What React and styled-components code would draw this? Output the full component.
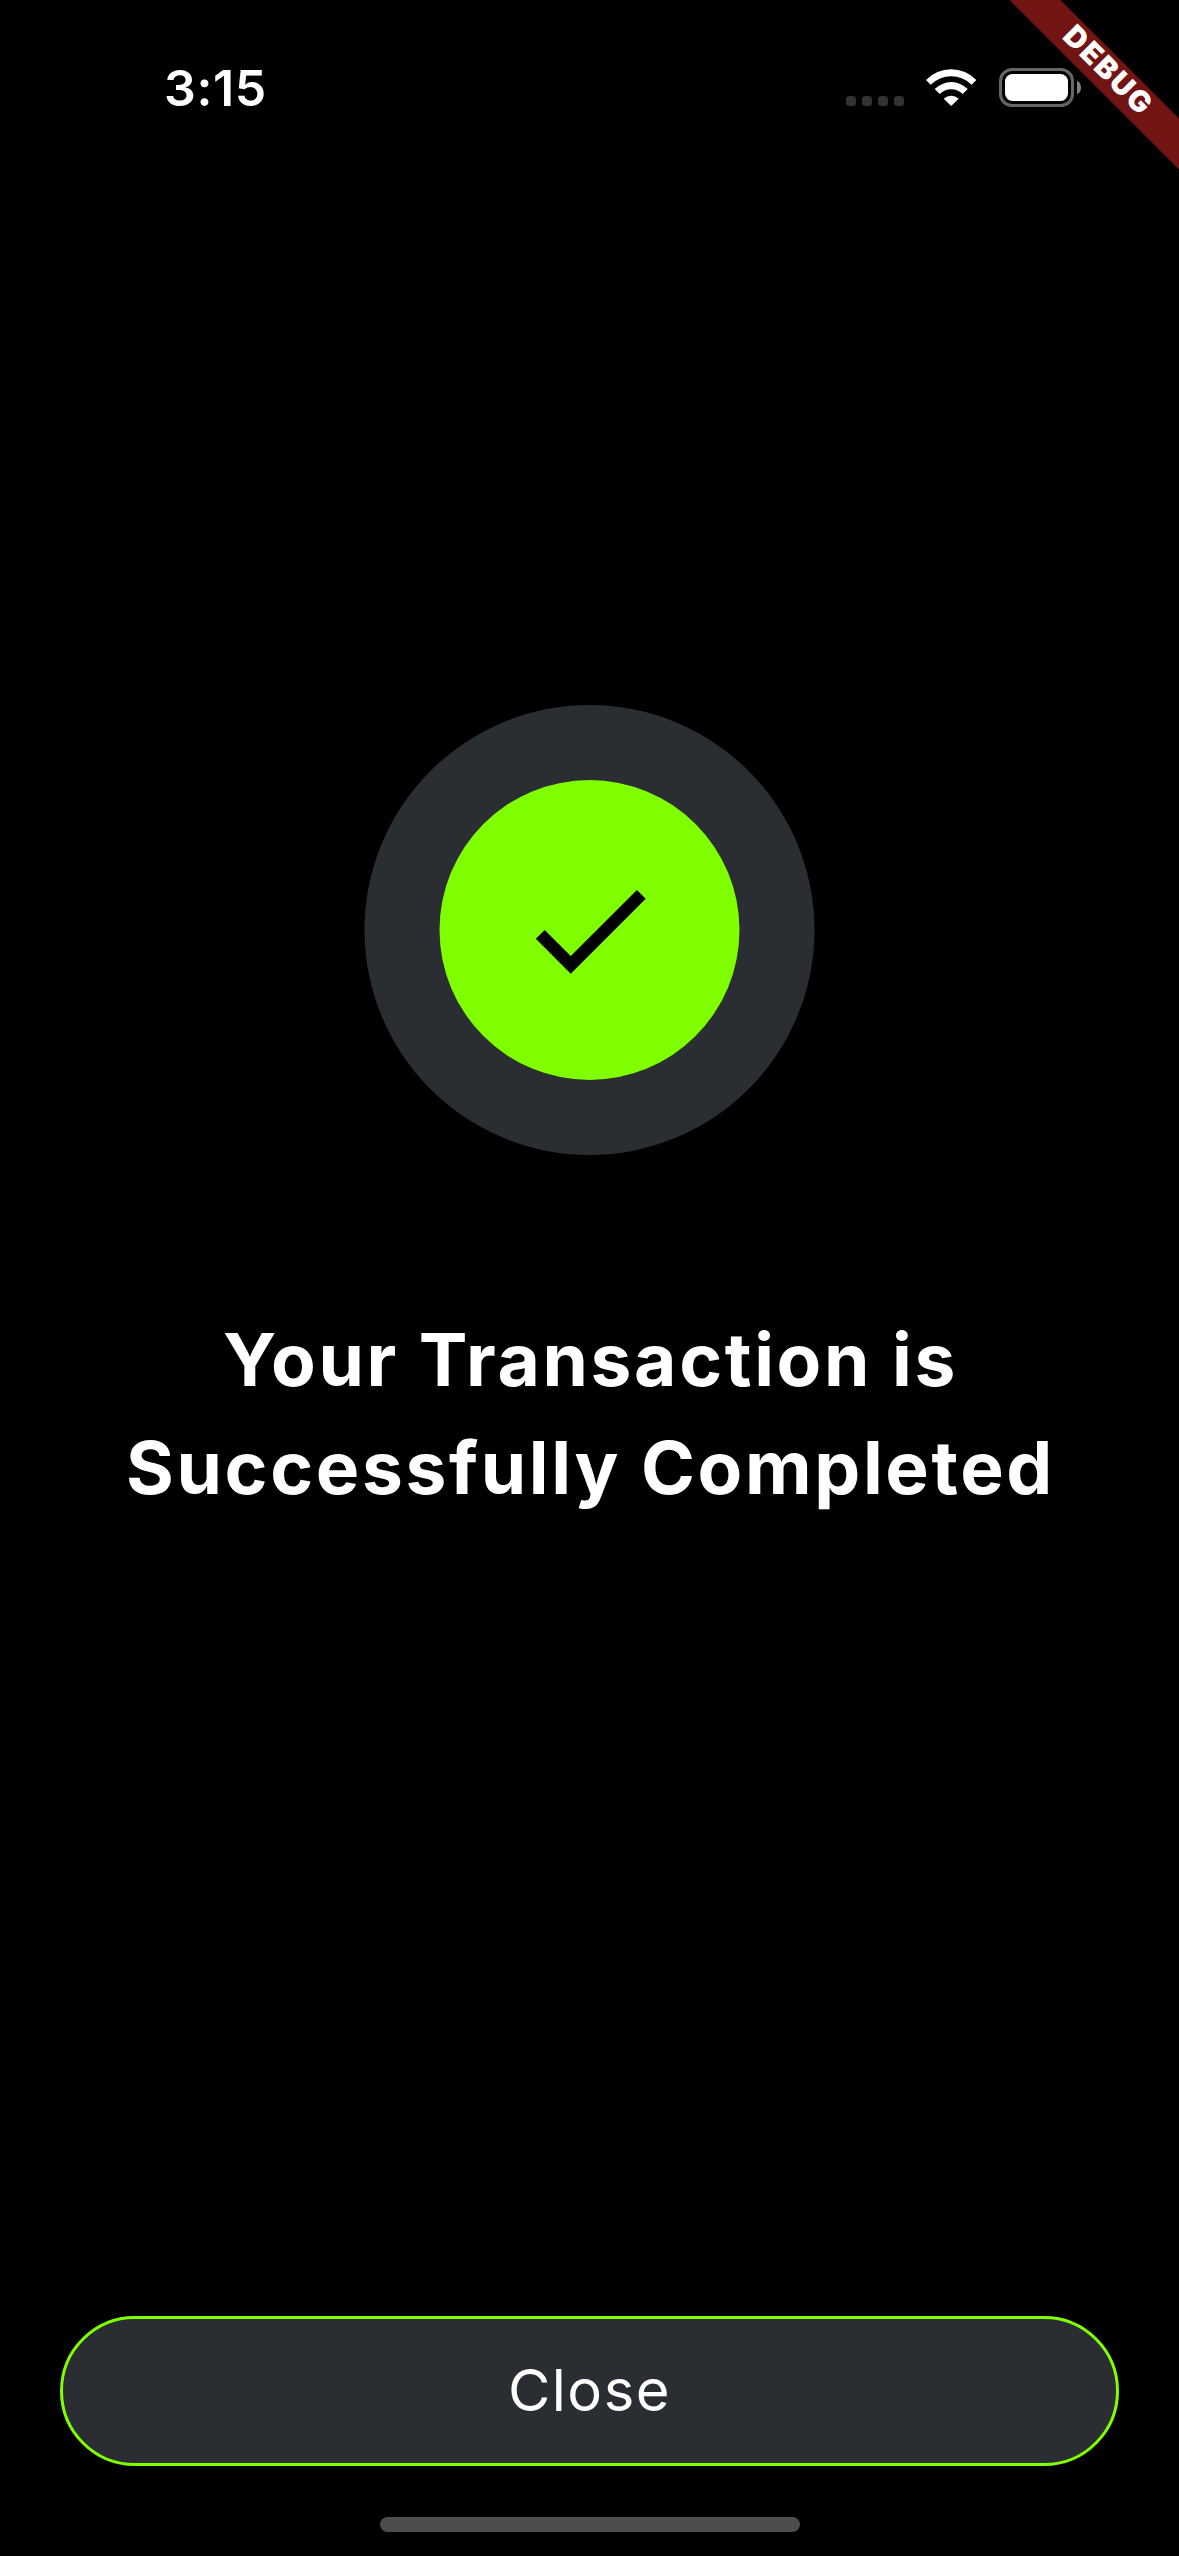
import React from "react";
import styled, { createGlobalStyle } from "styled-components";

const GlobalStyle = createGlobalStyle`
  *, *::before, *::after { box-sizing: border-box; }
  body { margin: 0; background: #000; }
`;

const Screen = styled.main`
  position: relative;
  display: flex;
  flex-direction: column;
  width: 1179px;
  height: 2556px;
  overflow: hidden;
  background: #000;
  color: #fff;
  font-family: Inter, "Liberation Sans", sans-serif;
`;

const StatusBar = styled.header`
  display: flex;
  justify-content: space-between;
  align-items: flex-start;
  height: 177px;
  padding: 68px 98px 0 164px;
`;

const Time = styled.time`
  font-size: 50px;
  font-weight: 600;
  line-height: 40px;
  letter-spacing: 0.6px;
`;

const StatusIcons = styled.div`
  display: flex;
  align-items: flex-start;
`;

const SignalDots = styled.div`
  display: flex;
  gap: 6px;
  margin: 28px 22px 0 0;
`;

const Dot = styled.span`
  width: 10px;
  height: 10px;
  border-radius: 3.5px;
  background: #333;
`;

const WifiIcon = styled.svg`
  display: block;
  width: 50.4px;
  height: 37px;
  margin: 1px 22.2px 0 0;
`;

const Battery = styled.div`
  display: flex;
  align-items: center;
  gap: 3px;
`;

const BatteryShell = styled.div`
  width: 75px;
  height: 39px;
  padding: 3px;
  border: 3px solid #666;
  border-radius: 13px;
`;

const BatteryLevel = styled.div`
  height: 100%;
  border-radius: 7.5px;
  background: #fff;
`;

const BatteryCap = styled.div`
  width: 4px;
  height: 13px;
  border-radius: 0 4px 4px 0 / 0 6.5px 6.5px 0;
  background: #808080;
`;

const DebugRibbon = styled.div`
  position: absolute;
  top: 54px;
  right: -128px;
  width: 400px;
  height: 36px;
  display: flex;
  justify-content: center;
  background: #721414;
  font-size: 29.5px;
  font-weight: 900;
  line-height: 31px;
  letter-spacing: 2.1px;
  transform: rotate(45deg);
`;

const Result = styled.section`
  display: flex;
  flex-direction: column;
  align-items: center;
  flex: 1;
  padding-top: 528px;
`;

const Halo = styled.div`
  display: flex;
  align-items: center;
  justify-content: center;
  width: 450px;
  height: 450px;
  border-radius: 50%;
  background: #2a2d32;
  transform: translateX(-0.5px);
`;

const Disc = styled.div`
  display: flex;
  align-items: center;
  justify-content: center;
  width: 300px;
  height: 300px;
  padding-left: 1px;
  border-radius: 50%;
  background: #80ff00;
`;

const CheckIcon = styled.svg`
  display: block;
  width: 150px;
  height: 150px;
`;

const Title = styled.h1`
  margin: 151px 0 0;
  padding-left: 2px;
  font-size: 73px;
  font-weight: 700;
  line-height: 108px;
  letter-spacing: 2.65px;
  text-align: center;
`;

const TitleLine = styled.span`
  display: block;
  white-space: nowrap;
`;

const Footer = styled.footer`
  display: flex;
  flex-direction: column;
  align-items: center;
  padding: 0 60px 24px;
`;

const CloseButton = styled.button`
  width: 100%;
  height: 150px;
  margin: 0 0 51px;
  padding: 0 0 2px;
  border: 3px solid #80ff00;
  border-radius: 75px;
  background: #2a2d32;
  color: #fff;
  font-family: inherit;
  font-size: 58px;
  font-weight: 400;
  letter-spacing: 1.5px;
`;

const HomeIndicator = styled.div`
  width: 420px;
  height: 15px;
  border-radius: 8px;
  background: #4d4d4d;
`;

export default function App() {
  return (
    <>
      <GlobalStyle />
      <Screen>
        <StatusBar>
          <Time>3:15</Time>
          <StatusIcons>
            <SignalDots>
              <Dot />
              <Dot />
              <Dot />
              <Dot />
            </SignalDots>
            <WifiIcon viewBox="0 0 151 111" fill="#fff" aria-hidden="true">
              <path d="M0 33A105 105 0 0 1 151 33L137 47A88 88 0 0 0 14 47Z" />
              <path d="M26 60A70 70 0 0 1 125 60L110 75A49 49 0 0 0 41 75Z" />
              <path d="M53 89A33 33 0 0 1 98 89L75.500 111Z" />
            </WifiIcon>
            <Battery>
              <BatteryShell>
                <BatteryLevel />
              </BatteryShell>
              <BatteryCap />
            </Battery>
          </StatusIcons>
        </StatusBar>
        <Result>
          <Halo>
            <Disc>
              <CheckIcon viewBox="0 0 24 24" aria-hidden="true">
                <path d="M9 16.170 4.830 12l-1.420 1.410L9 19 21 7l-1.410-1.410z" />
              </CheckIcon>
            </Disc>
          </Halo>
          <Title>
            <TitleLine>Your Transaction is</TitleLine>
            <TitleLine>Successfully Completed</TitleLine>
          </Title>
        </Result>
        <Footer>
          <CloseButton type="button">Close</CloseButton>
          <HomeIndicator />
        </Footer>
        <DebugRibbon>DEBUG</DebugRibbon>
      </Screen>
    </>
  );
}
